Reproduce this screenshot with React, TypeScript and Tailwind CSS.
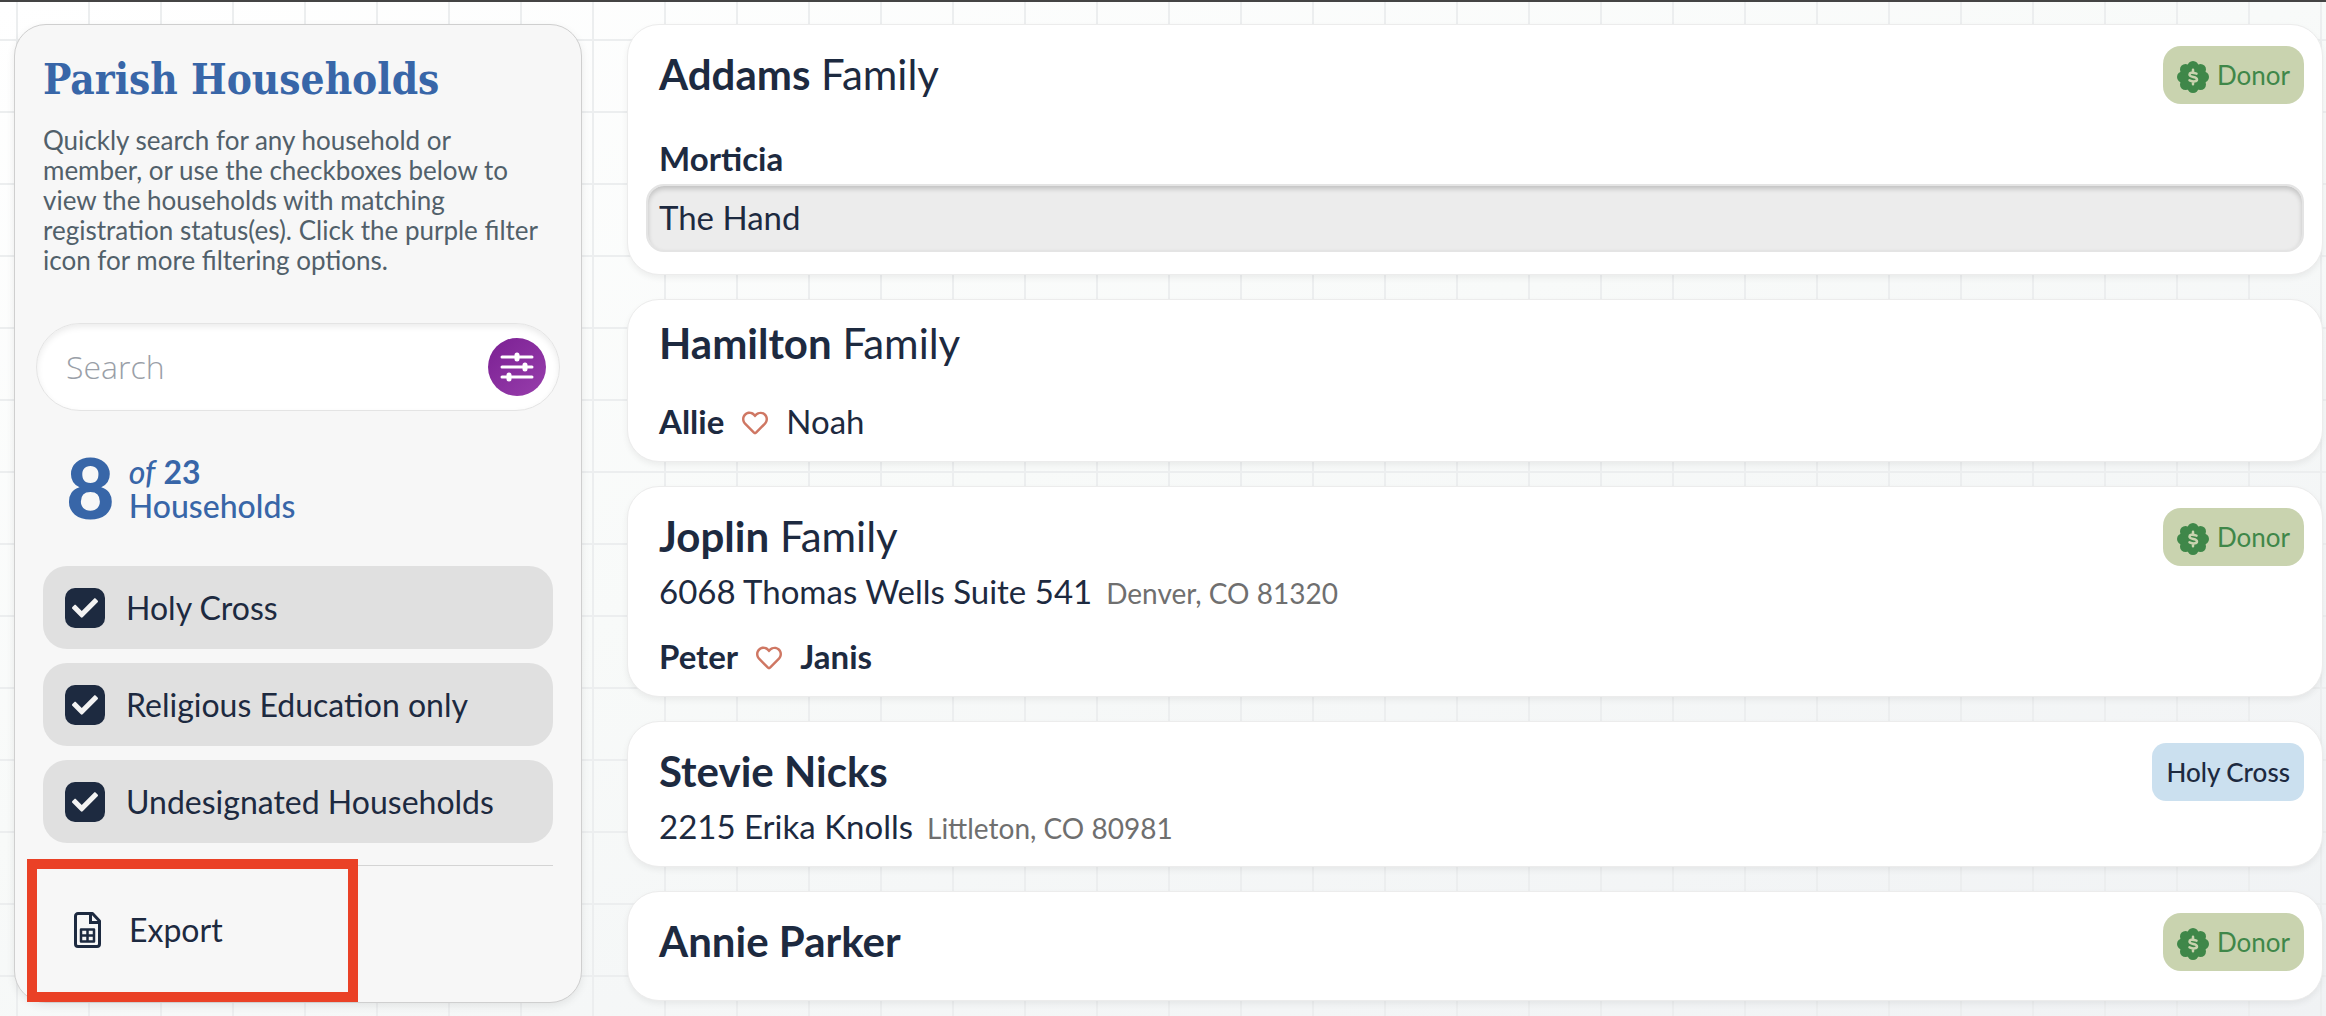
import { FaCheck, FaRegHeart } from 'react-icons/fa';

interface Member {
  name: string;
  active: boolean;
}

interface Household {
  name: string;
  suffix?: string;
  badge?: 'donor' | 'parish';
  street?: string;
  city?: string;
  couple?: Member[];
  others?: string[];
}

const statuses = ['Holy Cross', 'Religious Education only', 'Undesignated Households'];

const households: Household[] = [
  {
    name: 'Addams',
    suffix: 'Family',
    badge: 'donor',
    couple: [{ name: 'Morticia', active: true }],
    others: ['The Hand'],
  },
  {
    name: 'Hamilton',
    suffix: 'Family',
    couple: [
      { name: 'Allie', active: true },
      { name: 'Noah', active: false },
    ],
  },
  {
    name: 'Joplin',
    suffix: 'Family',
    badge: 'donor',
    street: '6068 Thomas Wells Suite 541',
    city: 'Denver, CO 81320',
    couple: [
      { name: 'Peter', active: true },
      { name: 'Janis', active: true },
    ],
  },
  { name: 'Stevie Nicks', badge: 'parish', street: '2215 Erika Knolls', city: 'Littleton, CO 80981' },
  { name: 'Annie Parker', badge: 'donor' },
];

function SlidersIcon() {
  return (
    <svg viewBox="0 0 34 30" className="h-[30px] w-[34px]" stroke="currentColor" strokeLinecap="round" fill="none">
      <path d="M2 5h30M2 15h30M2 25h30" strokeWidth="3" />
      <path d="M17 3v4M25 13v4M9 23v4" strokeWidth="5" />
    </svg>
  );
}

function SpreadsheetIcon() {
  return (
    <svg viewBox="0 0 27 36" className="h-9 w-[27px]" fill="none" stroke="currentColor" aria-hidden="true">
      <path
        d="M4 1.500h14.500l7 7.500V32a2.500 2.500 0 0 1-2.500 2.500H4A2.500 2.500 0 0 1 1.500 32V4A2.500 2.500 0 0 1 4 1.500z"
        strokeWidth="3"
        strokeLinejoin="round"
      />
      <path d="M16.500 2v8.500h8.500" strokeWidth="3" />
      <path d="M7 17.500h13v12H7zM13.500 17.500v12M7 23.500h13" strokeWidth="2.500" strokeLinejoin="round" />
    </svg>
  );
}

function DonorIcon() {
  return (
    <svg viewBox="0 0 32 32" className="mt-1 h-8 w-8" aria-hidden="true">
      <g fill="#3f8749">
        <circle cx="16" cy="16" r="13" />
        <circle cx="16" cy="5.500" r="5.500" />
        <circle cx="16" cy="26.500" r="5.500" />
        <circle cx="5.500" cy="16" r="5.500" />
        <circle cx="26.500" cy="16" r="5.500" />
        <circle cx="8.500" cy="8.500" r="5.500" />
        <circle cx="23.500" cy="8.500" r="5.500" />
        <circle cx="8.500" cy="23.500" r="5.500" />
        <circle cx="23.500" cy="23.500" r="5.500" />
      </g>
      <path
        d="M19.500 12.600c-5-1.800-7-.6-7 .9 0 3.400 7.500 1.600 7.500 5 0 1.900-3 2.700-7.500.8M16 8.800v2.600M16 20.600v2.600"
        stroke="#c9d3af"
        strokeWidth="2.500"
        strokeLinecap="round"
        fill="none"
      />
    </svg>
  );
}

function Badge({ kind }: { kind: 'donor' | 'parish' }) {
  if (kind === 'donor') {
    return (
      <span className="flex h-[58px] items-center gap-2 rounded-[18px] bg-[#c9d3af] px-[14px] text-[26px] text-[#3f8749]">
        <DonorIcon />
        Donor
      </span>
    );
  }
  return (
    <span className="flex h-[58px] items-center rounded-[14px] bg-[#cbe0ef] px-[14px] text-[26px] font-medium">
      Holy Cross
    </span>
  );
}

function HouseholdCard({ household }: { household: Household }) {
  const { name, suffix, badge, street, city, couple, others } = household;

  return (
    <article className="rounded-[32px] border border-[#ececec] bg-white px-[18px] pt-[21px] pb-[22px] shadow-[0_3px_6px_rgba(0,0,0,0.06)]">
      <header className="flex items-center justify-between pl-[13px]">
        <h2 className="pb-[2px] text-[42px] leading-[44px]">
          <span className="font-bold">{name}</span>
          {suffix ? ` ${suffix}` : null}
        </h2>
        {badge ? <Badge kind={badge} /> : null}
      </header>

      <div className="pt-[7px] pl-[13px]">
        {street ? (
          <div className="flex h-9 items-baseline gap-[14px] leading-9">
            <span className="text-[33px]">{street}</span>
            <span className="text-[28px] text-[#6f6f6f]">{city}</span>
          </div>
        ) : null}
      </div>

      {couple ? (
        <div className="mt-[29px] flex items-center gap-[18px] pl-[13px] text-[33px] leading-9">
          {couple.map((member, i) => (
            <div key={member.name} className="flex items-center gap-[18px]">
              {i > 0 ? <FaRegHeart className="mt-1 size-[26px] text-[#cf7763]" /> : null}
              <span className={member.active ? 'font-bold' : ''}>{member.name}</span>
            </div>
          ))}
        </div>
      ) : null}

      {others?.map((other) => (
        <div
          key={other}
          className="mt-2 flex h-[68px] items-center rounded-[18px] border-2 border-[#e4e4e4] bg-[#ececec] px-[11px] pb-[2px] text-[33px] leading-9 shadow-[inset_0_3px_5px_rgba(0,0,0,0.18)]"
        >
          {other}
        </div>
      ))}
    </article>
  );
}

function Sidebar() {
  return (
    <aside className="w-[568px] shrink-0 rounded-[32px] border border-[#cfcfcf] bg-[#f7f7f7] px-7 pt-7 pb-5 shadow-[0_3px_8px_rgba(0,0,0,0.08)]">
      <h1 className="font-['DejaVu_Serif_Condensed','DejaVu_Serif',serif] text-[42px] leading-[54px] font-bold text-[#3866a8]">
        Parish Households
      </h1>
      <p className="mt-[18px] text-[26px] leading-[30px] text-[#51606a]">
        Quickly search for any household or member, or use the checkboxes below to view the households with matching
        registration status(es). Click the purple filter icon for more filtering options.
      </p>

      <div className="-mx-[7px] mt-12 flex h-[88px] items-center rounded-full border border-[#e4e4e4] bg-white pr-[13px] pl-[29px] shadow-[inset_0_3px_6px_rgba(0,0,0,0.08)]">
        <input
          type="text"
          aria-label="Search"
          placeholder="Search"
          className="min-w-0 flex-1 bg-transparent font-['Open_Sans',sans-serif] text-[32px] font-light outline-none placeholder:text-[#9a9fa8]"
        />
        <button
          type="button"
          aria-label="Filters"
          className="flex size-[58px] items-center justify-center rounded-full bg-linear-to-br from-[#7b1f93] to-[#983eac] text-white"
        >
          <SlidersIcon />
        </button>
      </div>

      <div className="mt-10 flex items-center gap-[14px] pl-[23px] text-[#3866a8]">
        <span className="pb-1 text-[84px] leading-[72px] font-black">8</span>
        <div className="text-[32px] leading-[34px] font-medium">
          <p>
            <em>of</em> <strong>23</strong>
          </p>
          <p>Households</p>
        </div>
      </div>

      <div className="mt-[39px] flex flex-col gap-[14px]">
        {statuses.map((status) => (
          <label key={status} className="flex h-[83px] items-center gap-[21px] rounded-[24px] bg-[#e0e0e0] px-[22px] text-[32px]">
            <span className="grid size-10 place-items-center">
              <input
                type="checkbox"
                defaultChecked
                className="col-start-1 row-start-1 size-10 appearance-none rounded-[10px] bg-[#1d2a40]"
              />
              <FaCheck className="pointer-events-none col-start-1 row-start-1 size-[26px] text-[#f3f3f3]" />
            </span>
            {status}
          </label>
        ))}
      </div>

      <div className="relative mt-[22px] border-t border-[#d4d4d4] pt-[46px] pb-[34px]">
        <button type="button" className="flex items-center gap-7 pl-[31px] text-[32px] leading-9">
          <SpreadsheetIcon />
          Export
        </button>
        <div className="pointer-events-none absolute -top-[7px] -left-4 h-[143px] w-[331px] border-[10px] border-[#ea4126]" />
      </div>
    </aside>
  );
}

export default function App() {
  return (
    <div className="min-h-screen border-t-2 border-[#444444] bg-[linear-gradient(90deg,#eceeef_2px,transparent_2px),linear-gradient(#eceeef_2px,transparent_2px),linear-gradient(160deg,#ffffff,#f8faf9_45%,#f0f2f4)] bg-[size:72px_72px,72px_72px,100%_100%] bg-position-[16px_37px,16px_37px,0_0] font-[Lato,sans-serif] text-[#1d2a40]">
      <div className="flex items-start gap-[45px] pt-[22px] pr-[3px] pb-3 pl-[14px]">
        <Sidebar />
        <main className="flex min-w-0 flex-1 flex-col gap-6">
          {households.map((household) => (
            <HouseholdCard key={household.name} household={household} />
          ))}
        </main>
      </div>
    </div>
  );
}
